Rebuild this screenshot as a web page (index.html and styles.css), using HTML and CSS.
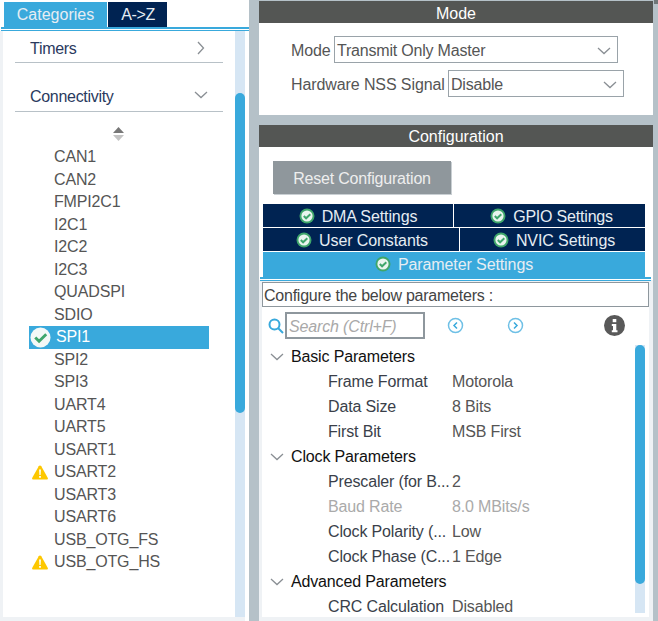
FILE: index.html
```html
<!DOCTYPE html>
<html>
<head>
<meta charset="utf-8">
<title>Pinout and Configuration</title>
<link rel="stylesheet" href="styles.css">
</head>
<body>
<svg class="defs" width="0" height="0">
	<symbol id="ok" viewBox="0 0 16 16">
		<circle cx="8" cy="8" r="7.500" fill="#3fa66b"/>
		<circle cx="8" cy="8" r="5.600" fill="#e9f5ee"/>
		<path d="M4.800 8l2.300 2.300 4.200-4" fill="none" stroke="#3fa66b" stroke-width="2"/>
	</symbol>
	<symbol id="ok_big" viewBox="0 0 22 22">
		<circle cx="11" cy="11" r="10.500" fill="#f4f8f6"/>
		<path d="M5.500 11l4 4 7.500-7.500" fill="none" stroke="#3fa66b" stroke-width="3"/>
	</symbol>
	<symbol id="warn" viewBox="0 0 16 15">
		<path d="M8 .5c.6 0 1 .3 1.300.8l6.400 11.400c.5.900 0 1.800-1 1.800H1.300c-1 0-1.500-.9-1-1.800L6.700 1.300C7 .8 7.400.5 8 .5z" fill="#fdc700"/>
		<path d="M7.100 4.500h1.800l-.3 5.500H7.400zM7.100 11h1.800v1.800H7.100z" fill="#fff"/>
	</symbol>
	<symbol id="down" viewBox="0 0 14 8">
		<path d="M1 1l6 5.500L13 1" fill="none" stroke="#8a8f94" stroke-width="1.300"/>
	</symbol>
</svg>

<div class="page">
	<div class="left">
		<div class="tabs">
			<div class="tab on">Categories</div>
			<div class="tab tab_az">A-&gt;Z</div>
		</div>
		<div class="tab_line"></div>
		<div class="left_body">
			<div class="left_main">
				<div class="cat cat_first">
					<span>Timers</span>
					<svg class="cat_arrow_r" width="8" height="14" viewBox="0 0 8 14"><path d="M1 1l5.500 6L1 13" fill="none" stroke="#8a8f94" stroke-width="1.300"/></svg>
				</div>
				<div class="cat cat_second">
					<span>Connectivity</span>
					<svg class="cat_arrow_d" width="14" height="8"><use href="#down"/></svg>
				</div>
				<div class="sort">
					<svg width="11" height="14" viewBox="0 0 11 14"><path d="M5.500 0l5.500 6H0z" fill="#777"/><path d="M5.500 14L0 8h11z" fill="#c4c4c4"/></svg>
				</div>
				<ul class="ip_list">
					<li>CAN1</li>
					<li>CAN2</li>
					<li>FMPI2C1</li>
					<li>I2C1</li>
					<li>I2C2</li>
					<li>I2C3</li>
					<li>QUADSPI</li>
					<li>SDIO</li>
					<li class="sel"><svg class="ip_ok" width="21" height="21"><use href="#ok_big"/></svg>SPI1</li>
					<li>SPI2</li>
					<li>SPI3</li>
					<li>UART4</li>
					<li>UART5</li>
					<li>USART1</li>
					<li><svg class="ip_warn" width="16" height="15"><use href="#warn"/></svg>USART2</li>
					<li>USART3</li>
					<li>USART6</li>
					<li>USB_OTG_FS</li>
					<li><svg class="ip_warn" width="16" height="15"><use href="#warn"/></svg>USB_OTG_HS</li>
				</ul>
			</div>
			<div class="scroll left_scroll"><div class="thumb"></div></div>
		</div>
	</div>

	<div class="gutter"></div>

	<div class="right">
		<div class="panel mode_panel">
			<div class="panel_head mode_head">Mode</div>
			<div class="mode_rows">
				<div class="mode_row">
					<span class="lbl_mode">Mode</span>
					<div class="combo combo_mode">Transmit Only Master<svg width="14" height="8"><use href="#down"/></svg></div>
				</div>
				<div class="mode_row">
					<span class="lbl_nss">Hardware NSS Signal</span>
					<div class="combo combo_nss">Disable<svg width="14" height="8"><use href="#down"/></svg></div>
				</div>
			</div>
		</div>

		<div class="panel conf_panel">
			<div class="panel_head">Configuration</div>
			<div class="reset">Reset Configuration</div>
			<div class="conf_tabs">
				<div class="conf_row">
					<div class="ctab ctab_dma"><svg width="16" height="16"><use href="#ok"/></svg>DMA Settings</div>
					<div class="ctab ctab_fill ctab_gpio"><svg width="16" height="16"><use href="#ok"/></svg>GPIO Settings</div>
				</div>
				<div class="conf_row">
					<div class="ctab ctab_user"><svg width="16" height="16"><use href="#ok"/></svg>User Constants</div>
					<div class="ctab ctab_fill ctab_nvic"><svg width="16" height="16"><use href="#ok"/></svg>NVIC Settings</div>
				</div>
				<div class="conf_row">
					<div class="ctab ctab_param"><svg width="16" height="16"><use href="#ok"/></svg>Parameter Settings</div>
				</div>
			</div>
			<div class="tab_line conf_line"></div>
			<div class="param_area">
				<div class="param_title">Configure the below parameters :</div>
				<div class="search_row">
					<svg class="search_icon" width="16" height="16" viewBox="0 0 16 16"><circle cx="6.500" cy="6.500" r="5" fill="none" stroke="#38a9dc" stroke-width="2"/><path d="M10 10l5 5" stroke="#38a9dc" stroke-width="2"/></svg>
					<div class="search_box">Search (Ctrl+F)</div>
					<svg class="nav_prev" width="17" height="17" viewBox="0 0 17 17"><circle cx="8.500" cy="8.500" r="7" fill="#fff" stroke="#6fc0e6" stroke-width="1.500"/><path d="M10 5.500l-3 3 3 3" fill="none" stroke="#38a9dc" stroke-width="1.500"/></svg>
					<svg class="nav_next" width="17" height="17" viewBox="0 0 17 17"><circle cx="8.500" cy="8.500" r="7" fill="#fff" stroke="#6fc0e6" stroke-width="1.500"/><path d="M7 5.500l3 3-3 3" fill="none" stroke="#38a9dc" stroke-width="1.500"/></svg>
					<svg class="info" width="21" height="21" viewBox="0 0 21 21"><circle cx="10.500" cy="10.500" r="10.500" fill="#595959"/><rect x="8.700" y="4" width="3.600" height="3.200" fill="#fff"/><path d="M7.800 9h4.500v6.200h1.200v2H7.800v-2H9v-4.200H7.800z" fill="#fff"/></svg>
				</div>
				<div class="tree_wrap">
					<div class="tree">
						<div class="group"><svg width="14" height="8"><use href="#down"/></svg>Basic Parameters</div>
						<div class="item"><span class="name">Frame Format</span><span>Motorola</span></div>
						<div class="item"><span class="name">Data Size</span><span>8 Bits</span></div>
						<div class="item"><span class="name">First Bit</span><span>MSB First</span></div>
						<div class="group"><svg width="14" height="8"><use href="#down"/></svg>Clock Parameters</div>
						<div class="item"><span class="name">Prescaler (for B...</span><span>2</span></div>
						<div class="item off"><span class="name">Baud Rate</span><span>8.0 MBits/s</span></div>
						<div class="item"><span class="name">Clock Polarity (...</span><span>Low</span></div>
						<div class="item"><span class="name">Clock Phase (C...</span><span>1 Edge</span></div>
						<div class="group"><svg width="14" height="8"><use href="#down"/></svg>Advanced Parameters</div>
						<div class="item"><span class="name">CRC Calculation</span><span>Disabled</span></div>
					</div>
					<div class="scroll tree_scroll"><div class="thumb"></div></div>
				</div>
			</div>
		</div>
	</div>

	<div class="edge"><div class="edge_corner"></div></div>
</div>
</body>
</html>
```

FILE: styles.css
```css
html,body{margin:0;padding:0;height:621px;overflow:hidden;}
body{background:#b5c1c8;font:16px/1 "Liberation Sans", Arial, sans-serif;color:#555;}
.defs{display:block;height:0;}
.page{display:flex;height:621px;}

/* left side */
.left{width:249px;display:flex;flex-direction:column;background:#fff;}
.tabs{display:flex;gap:1px;padding:2px 0 0 4px;height:25px;}
.tab{width:59px;height:25px;line-height:26px;text-align:center;background:#002352;color:#e6edf3;}
.tab_az{letter-spacing:-0.4px;padding-left:1px;width:58px;}
.tab.on{width:103px;background:#39a9dc;}
.tab_line{height:1px;margin-left:1px;border-top:2px solid #39a9dc;border-bottom:1px solid #39a9dc;background:#fff;}
.left_body{flex:1;display:flex;min-height:0;padding:0 4px 4px 3px;background:linear-gradient(#fff,#fff) no-repeat right top/4px 100%,#eff2f5;}
.left_main{width:232px;background:#fff;}
.cat{margin:0 12px;display:flex;justify-content:space-between;align-items:center;border-bottom:1px solid #b8c1c7;color:#2a3a5e;letter-spacing:-0.3px;box-sizing:border-box;}
.cat_first{height:32px;padding:5px 18px 0 15px;}
.cat_second{height:33px;margin-top:16px;padding:4px 15px 0 15px;}
.cat_arrow_r{margin-bottom:3px;}
.cat_arrow_d{margin-bottom:5px;}
.sort{height:34px;padding:10px 0 0 110px;box-sizing:border-box;display:flex;align-items:center;}
.ip_list{list-style:none;margin:0 0 0 26px;padding:0;width:180px;letter-spacing:-0.15px;}
.ip_list li{height:22.5px;line-height:22.5px;padding-left:25px;box-sizing:border-box;position:relative;white-space:nowrap;}
.ip_list li.sel{background:#39a9dc;color:#fff;padding-left:27px;}
.ip_warn{position:absolute;left:3px;top:4px;}
.ip_ok{position:absolute;left:1px;top:1px;}
.scroll{width:10px;background:#d6e6f4;}
.thumb{background:#39a9dc;border-radius:5px;}
.left_scroll{padding-top:62px;}
.left_scroll .thumb{height:320px;}

.gutter{width:10px;background:#b5c1c8;}

/* right side */
.right{width:394px;display:flex;flex-direction:column;gap:10px;padding-top:1px;box-sizing:border-box;}
.edge{width:5px;}
.edge_corner{width:4px;height:4px;margin-left:1px;background:#6f7678;}
.panel{background:#fff;}
.mode_panel{height:114px;}
.panel_head{height:22px;line-height:24px;background:#545654;color:#fff;text-align:center;}
.mode_head{line-height:26px;}
.mode_rows{padding:13px 0 0 32px;display:flex;flex-direction:column;gap:7px;}
.mode_row{display:flex;align-items:center;}
.mode_row span{padding-top:2px;letter-spacing:-0.1px;white-space:nowrap;}
.lbl_mode{width:43px;}
.lbl_nss{width:157px;}
.combo{height:27px;border:1px solid #9aa3a9;box-sizing:border-box;padding:2px 6px 0 2px;display:flex;justify-content:space-between;align-items:center;letter-spacing:-0.2px;}
.combo_mode{width:284px;}
.combo_nss{width:176px;}
.reset{width:178px;height:33px;line-height:35px;margin:14px 0 10px 14px;background:#8f979c;color:#eee;text-align:center;letter-spacing:-0.2px;box-shadow:1px 1px 0 #c9cfd3;}

/* configuration */
.conf_panel{flex:1;display:flex;flex-direction:column;min-height:0;background:linear-gradient(#fff,#fff) no-repeat 0 0/100% 155px,#eff2f5;}
.conf_tabs{margin-left:4px;width:382px;display:flex;flex-direction:column;gap:1px;}
.conf_row{display:flex;gap:1px;}
.ctab{height:23px;background:#002352;color:#e6edf3;display:flex;align-items:center;justify-content:center;gap:7px;padding-top:2px;box-sizing:border-box;letter-spacing:-0.1px;}
.ctab svg{margin-top:-2px;}
.ctab_dma{width:190px;}
.ctab_user{width:196px;padding-left:2px;}
.ctab_fill{flex:1;}
.ctab_gpio{padding-left:4px;letter-spacing:-0.2px;}
.ctab_nvic{padding-left:3px;}
.ctab_param{width:100%;height:25px;background:#39a9dc;padding-top:1px;}
.conf_line{margin:0 2px 0 1px;}
.param_area{flex:1;min-height:0;display:flex;flex-direction:column;margin:1px 4px 4px 3px;background:#fff;}
.param_title{height:25px;line-height:26px;border:1px solid #8e979d;padding-left:1px;box-sizing:border-box;color:#444;letter-spacing:-0.24px;}
.search_row{display:flex;align-items:center;height:27px;margin-top:5px;padding-left:6px;}
.search_icon{margin-right:1px;}
.search_box{width:140px;height:27px;line-height:25px;box-sizing:border-box;border:2px solid #8e979d;padding-left:2px;font-style:italic;color:#a9a9a9;letter-spacing:-0.15px;}
.nav_prev{margin-left:22px;}
.nav_next{margin-left:43px;}
.info{margin-left:80px;}
.tree_wrap{flex:1;min-height:0;display:flex;margin-top:5px;}
.tree{width:373px;overflow:hidden;letter-spacing:-0.15px;}
.group{height:25px;line-height:25px;color:#111;display:flex;align-items:center;padding-left:8px;box-sizing:border-box;}
.group svg{margin-right:7px;}
.item{height:25px;line-height:25px;display:flex;padding-left:66px;color:#555;white-space:nowrap;}
.name{width:124px;color:#3a3f4a;}
.off,.off .name{color:#aaa;}
.tree_scroll{height:268px;margin-top:1px;}
.tree_scroll .thumb{height:239px;}
```
